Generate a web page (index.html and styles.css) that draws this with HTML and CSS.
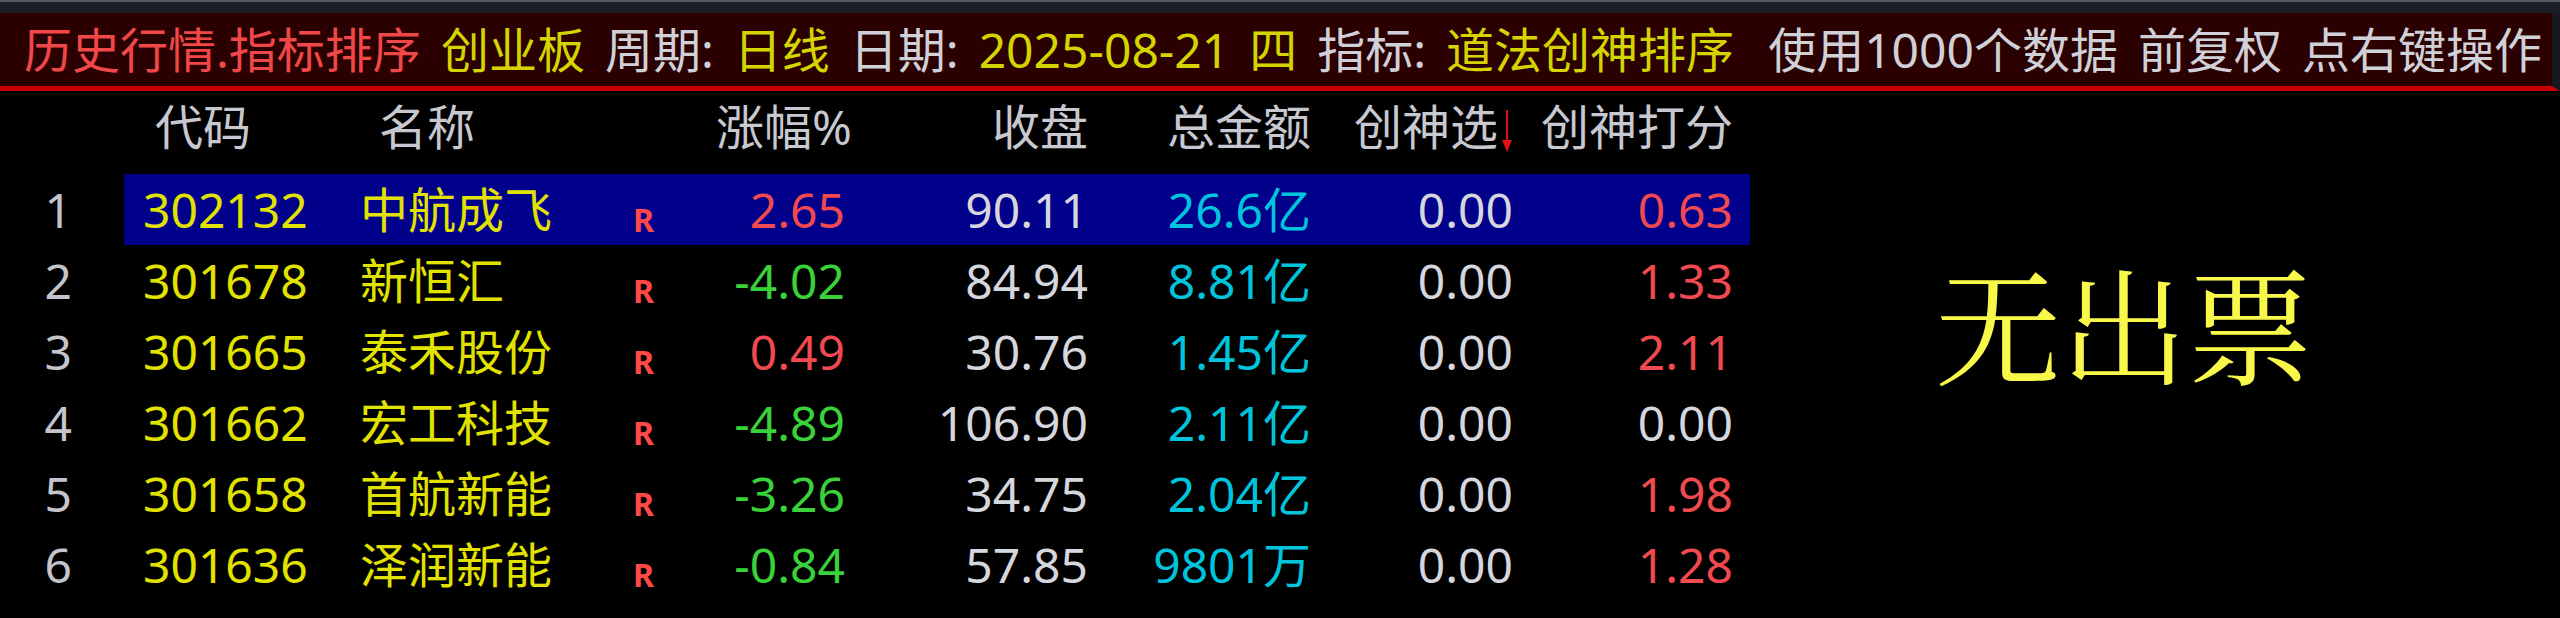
FILE: index.html
```html
<!DOCTYPE html>
<html lang="zh-CN">
<head>
<meta charset="utf-8">
<title>历史行情.指标排序</title>
<link rel="stylesheet" href="styles.css">
</head>
<body>
<div class="app">
  <div class="topstrip"></div>
  <div class="titlebar">
    <span class="t-red">历史行情.指标排序</span>
    <span class="t-yel">创业板</span>
    <span class="t-gray">周期:</span>
    <span class="t-yel">日线</span>
    <span class="t-gray">日期:</span>
    <span class="t-yel">2025-08-21</span>
    <span class="t-yel">四</span>
    <span class="t-gray">指标:</span>
    <span class="t-yel">道法创神排序</span>
    <span class="t-gray wide">使用1000个数据</span>
    <span class="t-gray">前复权</span>
    <span class="t-gray">点右键操作</span>
  </div>
  <div class="main">
    <div class="table">
      <div class="row head">
        <div class="idx"></div>
        <div class="cells">
          <div class="c-code h-code">代码</div>
          <div class="c-name h-name">名称</div>
          <div class="c-r"></div>
          <div class="c-num h-num">涨幅%</div>
          <div class="c-num">收盘</div>
          <div class="c-num">总金额</div>
          <div class="c-num h-sort">创神选<svg class="arrow" width="12" height="42" viewBox="0 0 12 42"><line x1="6" y1="0" x2="6" y2="34" stroke="#e01010" stroke-width="2"/><path d="M1 30 L6 42 L11 30 Z" fill="#e01010"/></svg></div>
          <div class="c-num">创神打分</div>
          <div class="c-end"></div>
        </div>
      </div>

      <div class="row">
        <div class="idx">1</div>
        <div class="cells sel">
          <div class="c-code">302132</div>
          <div class="c-name">中航成飞</div>
          <div class="c-r">R</div>
          <div class="c-num up">2.65</div>
          <div class="c-num plain">90.11</div>
          <div class="c-num amt">26.6亿</div>
          <div class="c-num plain">0.00</div>
          <div class="c-num up">0.63</div>
          <div class="c-end"></div>
        </div>
      </div>

      <div class="row">
        <div class="idx">2</div>
        <div class="cells">
          <div class="c-code">301678</div>
          <div class="c-name">新恒汇</div>
          <div class="c-r">R</div>
          <div class="c-num down">-4.02</div>
          <div class="c-num plain">84.94</div>
          <div class="c-num amt">8.81亿</div>
          <div class="c-num plain">0.00</div>
          <div class="c-num up">1.33</div>
          <div class="c-end"></div>
        </div>
      </div>

      <div class="row">
        <div class="idx">3</div>
        <div class="cells">
          <div class="c-code">301665</div>
          <div class="c-name">泰禾股份</div>
          <div class="c-r">R</div>
          <div class="c-num up">0.49</div>
          <div class="c-num plain">30.76</div>
          <div class="c-num amt">1.45亿</div>
          <div class="c-num plain">0.00</div>
          <div class="c-num up">2.11</div>
          <div class="c-end"></div>
        </div>
      </div>

      <div class="row">
        <div class="idx">4</div>
        <div class="cells">
          <div class="c-code">301662</div>
          <div class="c-name">宏工科技</div>
          <div class="c-r">R</div>
          <div class="c-num down">-4.89</div>
          <div class="c-num plain">106.90</div>
          <div class="c-num amt">2.11亿</div>
          <div class="c-num plain">0.00</div>
          <div class="c-num plain">0.00</div>
          <div class="c-end"></div>
        </div>
      </div>

      <div class="row">
        <div class="idx">5</div>
        <div class="cells">
          <div class="c-code">301658</div>
          <div class="c-name">首航新能</div>
          <div class="c-r">R</div>
          <div class="c-num down">-3.26</div>
          <div class="c-num plain">34.75</div>
          <div class="c-num amt">2.04亿</div>
          <div class="c-num plain">0.00</div>
          <div class="c-num up">1.98</div>
          <div class="c-end"></div>
        </div>
      </div>

      <div class="row">
        <div class="idx">6</div>
        <div class="cells">
          <div class="c-code">301636</div>
          <div class="c-name">泽润新能</div>
          <div class="c-r">R</div>
          <div class="c-num down">-0.84</div>
          <div class="c-num plain">57.85</div>
          <div class="c-num amt">9801万</div>
          <div class="c-num plain">0.00</div>
          <div class="c-num up">1.28</div>
          <div class="c-end"></div>
        </div>
      </div>
    </div>
    <div class="side">
      <div class="nopick">无出票</div>
    </div>
  </div>
</div>
</body>
</html>
```

FILE: styles.css
```css
html, body {
  margin: 0;
  padding: 0;
  background: #000;
}
body {
  width: 2560px;
  height: 618px;
  overflow: hidden;
  font-family: "Noto Sans", "Noto Sans CJK SC", sans-serif;
}
.app {
  display: flex;
  flex-direction: column;
  height: 618px;
}
.topstrip {
  height: 11px;
  background: #1b1e25;
  border-top: 2px solid #55585f;
}
.titlebar {
  height: 73px;
  background: #2a0000;
  border-bottom: 5px solid #c80000;
  border-right: 8px solid #15181e;
  display: flex;
  align-items: center;
  gap: 20px;
  padding-left: 24px;
  font-size: 48px;
  line-height: 1;
  white-space: nowrap;
}
.t-red { color: #f04848; }
.t-yel { color: #d4d400; }
.t-gray { color: #d0d0d8; }
.wide { margin-left: 14px; }

.main {
  display: flex;
  flex: 1;
}
.table {
  width: 1750px;
  display: flex;
  flex-direction: column;
}
.row {
  display: flex;
  height: 71px;
  font-size: 48px;
  line-height: 1;
  white-space: nowrap;
}
.row.head {
  height: 83px;
  color: #c8c8d0;
}
.row.head .cells {
  padding-bottom: 12px;
  box-sizing: border-box;
}
.idx {
  width: 124px;
  box-sizing: border-box;
  padding-right: 52px;
  display: flex;
  align-items: center;
  justify-content: flex-end;
  color: #c4c4cc;
}
.cells {
  width: 1626px;
  display: grid;
  grid-template-columns: 236px 273px 30px 182px 243px 223px 202px 220px 17px;
  align-items: center;
}
.cells.sel {
  background: #00008a;
}
.c-code {
  padding-left: 19px;
  color: #e2e200;
}
.c-name {
  color: #e2e200;
}
.row.head .c-code,
.row.head .c-name {
  color: #c8c8d0;
}
.h-code { padding-left: 31px; }
.h-name { padding-left: 19px; }
.c-r {
  font-size: 32px;
  font-weight: bold;
  color: #ff4848;
  padding-top: 20px;
  font-family: "Noto Sans", sans-serif;
}
.c-num {
  text-align: right;
}
.h-num { margin-right: -7px; }
.h-sort {
  display: flex;
  justify-content: flex-end;
  align-items: center;
  gap: 3px;
}
.arrow {
  margin-top: 8px;
}
.up { color: #f04a50; }
.down { color: #3ad23a; }
.plain { color: #d6d6de; }
.amt { color: #00c4dc; }

.side {
  flex: 1;
  padding: 168px 0 0 185px;
}
.nopick {
  font-family: "Noto Serif CJK SC", "Source Han Serif SC", "Noto Serif", serif;
  font-size: 126px;
  line-height: 1;
  color: #f8f84a;
  white-space: nowrap;
}
```
